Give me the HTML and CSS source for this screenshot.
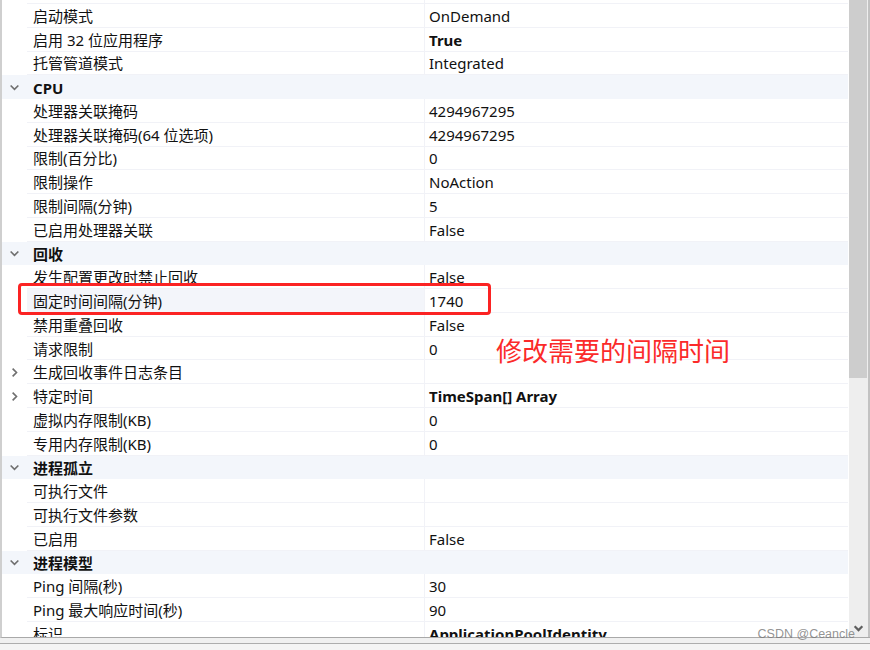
FILE: index.html
```html
<!DOCTYPE html>
<html lang="zh-CN">
<head>
<meta charset="utf-8">
<title>高级设置</title>
<link rel="stylesheet" href="styles.css">
</head>
<body>
<div class="window">
  <div class="grid-area">
    <div class="rows">
      <div class="list">
        <div class="row"><span class="gut"></span><span class="name"></span><span class="val"></span></div>
        <div class="row"><span class="gut"></span><span class="name">启动模式</span><span class="val">OnDemand</span></div>
        <div class="row"><span class="gut"></span><span class="name">启用 32 位应用程序</span><span class="val b">True</span></div>
        <div class="row"><span class="gut"></span><span class="name">托管管道模式</span><span class="val">Integrated</span></div>
        <div class="row cat"><span class="gut"><svg class="chev" viewBox="0 0 10 10"><path d="M1.5 3.2 L5 6.7 L8.5 3.2"/></svg></span><span class="name">CPU</span></div>
        <div class="row"><span class="gut"></span><span class="name">处理器关联掩码</span><span class="val">4294967295</span></div>
        <div class="row"><span class="gut"></span><span class="name">处理器关联掩码(64 位选项)</span><span class="val">4294967295</span></div>
        <div class="row"><span class="gut"></span><span class="name">限制(百分比)</span><span class="val">0</span></div>
        <div class="row"><span class="gut"></span><span class="name">限制操作</span><span class="val">NoAction</span></div>
        <div class="row"><span class="gut"></span><span class="name">限制间隔(分钟)</span><span class="val">5</span></div>
        <div class="row"><span class="gut"></span><span class="name">已启用处理器关联</span><span class="val">False</span></div>
        <div class="row cat"><span class="gut"><svg class="chev" viewBox="0 0 10 10"><path d="M1.5 3.2 L5 6.7 L8.5 3.2"/></svg></span><span class="name">回收</span></div>
        <div class="row"><span class="gut"></span><span class="name">发生配置更改时禁止回收</span><span class="val">False</span></div>
        <div class="row sel"><span class="gut"></span><span class="name">固定时间间隔(分钟)</span><span class="val">1740</span></div>
        <div class="row"><span class="gut"></span><span class="name">禁用重叠回收</span><span class="val">False</span></div>
        <div class="row"><span class="gut"></span><span class="name">请求限制</span><span class="val">0</span></div>
        <div class="row"><span class="gut"><svg class="chev" viewBox="0 0 10 10"><path d="M3.3 1.5 L6.8 5 L3.3 8.5"/></svg></span><span class="name">生成回收事件日志条目</span><span class="val"></span></div>
        <div class="row"><span class="gut"><svg class="chev" viewBox="0 0 10 10"><path d="M3.3 1.5 L6.8 5 L3.3 8.5"/></svg></span><span class="name">特定时间</span><span class="val b">TimeSpan[] Array</span></div>
        <div class="row"><span class="gut"></span><span class="name">虚拟内存限制(KB)</span><span class="val">0</span></div>
        <div class="row"><span class="gut"></span><span class="name">专用内存限制(KB)</span><span class="val">0</span></div>
        <div class="row cat"><span class="gut"><svg class="chev" viewBox="0 0 10 10"><path d="M1.5 3.2 L5 6.7 L8.5 3.2"/></svg></span><span class="name">进程孤立</span></div>
        <div class="row"><span class="gut"></span><span class="name">可执行文件</span><span class="val"></span></div>
        <div class="row"><span class="gut"></span><span class="name">可执行文件参数</span><span class="val"></span></div>
        <div class="row"><span class="gut"></span><span class="name">已启用</span><span class="val">False</span></div>
        <div class="row cat"><span class="gut"><svg class="chev" viewBox="0 0 10 10"><path d="M1.5 3.2 L5 6.7 L8.5 3.2"/></svg></span><span class="name">进程模型</span></div>
        <div class="row"><span class="gut"></span><span class="name">Ping 间隔(秒)</span><span class="val">30</span></div>
        <div class="row"><span class="gut"></span><span class="name">Ping 最大响应时间(秒)</span><span class="val">90</span></div>
        <div class="row"><span class="gut"></span><span class="name">标识</span><span class="val b">ApplicationPoolIdentity</span></div>
      </div>
    </div>
    <div class="vscroll">
      <div class="thumb"></div>
      <div class="track">
        <svg class="down" viewBox="0 0 10 10"><path d="M1.5 3 L5 6.5 L8.5 3"/></svg>
      </div>
    </div>
  </div>
  <div class="bottom-strip"><div class="desc-box"></div></div>

  <div class="red-box"></div>
  <div class="note">修改需要的间隔时间</div>
  <div class="watermark">CSDN @Ceancle</div>
</div>
</body>
</html>
```

FILE: styles.css
```css
* { box-sizing: border-box; }
html, body { margin: 0; padding: 0; background: #ffffff; }
body {
  width: 870px;
  height: 650px;
  overflow: hidden;
  font-family: "Noto Sans", "Noto Sans CJK SC", sans-serif;
  font-size: 15px;
  color: #111111;
}
.window {
  position: relative;
  width: 870px;
  height: 650px;
  display: flex;
  flex-direction: column;
}
.grid-area {
  display: flex;
  height: 638px;
  border-bottom: 1px solid #a9a9a9;
  border-left: 2px solid #cfcfcf;
}
.rows {
  flex: 1;
  overflow: hidden;
  background: #ffffff;
}
.list {
  margin-top: -19.8px;
}
.row {
  display: grid;
  grid-template-columns: 25px 397px 1fr;
  height: 23.78px;
  align-items: stretch;
}
.gut {
  display: flex;
  align-items: center;
  justify-content: center;
}
.name, .val {
  display: flex;
  align-items: center;
  border-bottom: 1px solid #f1f2f7;
  white-space: nowrap;
  line-height: 1;
  padding-top: 2px;
}
.name { padding-left: 6px; }
.val {
  padding-left: 4px;
  border-left: 1px solid #f1f2f7;
}
.b { font-weight: 700; }
.cat {
  background: #f3f6fb;
}
.cat .name {
  font-weight: 700;
  border-bottom: none;
}
.sel .name { background: #f3f5fa; }
.chev {
  width: 11px;
  height: 11px;
  fill: none;
  stroke: #6f6f6f;
  stroke-width: 1.5;
}
.vscroll {
  width: 22px;
  display: flex;
  flex-direction: column;
  background: #eeeeee;
  border-left: 1px solid #ffffff;
  border-right: 2px solid #c2c2c2;
  padding-right: 1px;
}
.thumb {
  height: 378px;
  background: #cdcdcd;
}
.track {
  flex: 1;
  display: flex;
  align-items: flex-end;
  justify-content: center;
  padding-bottom: 3px;
}
.down {
  width: 11px;
  height: 11px;
  fill: none;
  stroke: #5f5f5f;
  stroke-width: 2;
}
.bottom-strip {
  flex: 1;
  background: #f0f0f0;
  padding-top: 5px;
}
.desc-box {
  height: 100%;
  border-top: 1px solid #adadad;
  background: #f4f4f4;
}
.red-box {
  position: absolute;
  left: 18px;
  top: 283px;
  width: 473px;
  height: 32px;
  border: 3px solid #fb2323;
  border-radius: 4px;
}
.note {
  position: absolute;
  left: 496px;
  top: 336px;
  font-family: "Noto Sans CJK SC", sans-serif;
  font-size: 26px;
  line-height: 1.1;
  color: #fb2a2a;
  font-weight: 400;
}
.watermark {
  position: absolute;
  right: 15px;
  top: 627px;
  font-family: "Liberation Sans", Arial, sans-serif;
  font-size: 12.5px;
  color: rgba(120, 120, 120, 0.8);
}
```
